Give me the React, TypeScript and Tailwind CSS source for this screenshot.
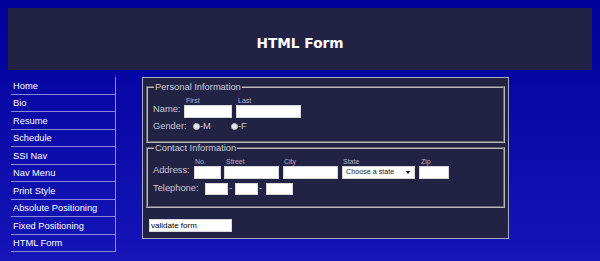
const navItems = [
  "Home",
  "Bio",
  "Resume",
  "Schedule",
  "SSI Nav",
  "Nav Menu",
  "Print Style",
  "Absolute Positioning",
  "Fixed Positioning",
  "HTML Form",
];

function Field({ label, width, pl = "pl-[1px]" }: { label: string; width: string; pl?: string }) {
  return (
    <div className="flex flex-col">
      <span className={`${pl} text-[7px] leading-[8px] text-[#b4b4cc]`}>{label}</span>
      <input type="text" className={`${width} h-[13px] border border-[#d8d8d8] bg-white`} />
    </div>
  );
}

function Radio({ label, width }: { label: string; width: string }) {
  return (
    <label className={`flex ${width} items-center`}>
      <span className="h-[7px] w-[7px] rounded-full border border-[#bbbbbb] bg-[#e8e8e8]" />
      <span>-{label}</span>
    </label>
  );
}

export default function App() {
  return (
    <div className="min-h-[261px] bg-gradient-to-b from-[#00009a] to-[#1515b8] pt-2 font-['Liberation_Sans',Arial,sans-serif]">
      <header className="mx-2 h-[62px] bg-[#222244] pt-[27px] text-center">
        <h1 className="font-['DejaVu_Sans',sans-serif] text-[13.7px] font-bold leading-[16px] text-white">
          HTML Form
        </h1>
      </header>

      <div className="mt-[7px] flex items-start pl-[11px]">
        <nav className="w-[105px] border-r border-[#8a8ad8]">
          {navItems.map((item) => (
            <a
              key={item}
              href="#"
              className="block h-[17.5px] border-b border-[#8a8ad8] pl-[2px] pt-[0.5px] text-[9.3px] leading-[16px] text-white"
            >
              {item}
            </a>
          ))}
        </nav>

        <form className="ml-[26px] h-[162px] w-[367px] border border-[#a9a9c4] bg-[#222244] text-[9.3px] text-[#c8c8d8]">
          <fieldset className="mx-[3px] mt-[3.5px] h-[61px] border-2 border-[#b8b8c4] pl-[5px] [border-style:groove]">
            <legend className="ml-[1px] px-[1px] leading-[11px] text-[#d0d0d8]">Personal Information</legend>
            <div className="mt-[4px] flex items-end gap-[4px]">
              <span className="mb-[3px] w-[27px] leading-[11px]">Name:</span>
              <Field label="First" width="w-[48px]" pl="pl-[2px]" />
              <Field label="Last" width="w-[65px]" pl="pl-[2px]" />
            </div>
            <div className="mt-[3.3px] flex items-center leading-[11px]">
              <span className="w-[40px]">Gender:</span>
              <Radio label="M" width="w-[38px]" />
              <Radio label="F" width="w-[20px]" />
            </div>
          </fieldset>

          <fieldset className="mx-[3px] h-[65px] border-2 border-[#b8b8c4] pl-[5px] [border-style:groove]">
            <legend className="ml-[1px] px-[1px] leading-[11px] text-[#d0d0d8]">Contact Information</legend>
            <div className="mt-[4px] flex items-end gap-[3px]">
              <span className="mb-[3px] w-[38px] leading-[11px]">Address:</span>
              <Field label="No." width="w-[27px]" />
              <Field label="Street" width="w-[55px]" pl="pl-[2px]" />
              <div className="ml-[1px]">
                <Field label="City" width="w-[55px]" />
              </div>
              <div className="ml-[1px] flex flex-col">
                <span className="pl-[1px] text-[7px] leading-[8px] text-[#b4b4cc]">State</span>
                <div className="flex h-[13px] w-[73px] items-center justify-between border border-[#d8d8d8] bg-white pl-[3px] pr-[4px] text-[7.2px] text-[#222222]">
                  <span>Choose a state</span>
                  <span className="h-0 w-0 border-x-[2.5px] border-t-[3px] border-x-transparent border-t-black" />
                </div>
              </div>
              <div className="ml-[1px]">
                <Field label="Zip" width="w-[30px]" pl="pl-[2px]" />
              </div>
            </div>
            <div className="mt-[4px] flex items-center leading-[11px]">
              <span className="w-[52px]">Telephone:</span>
              <input type="text" className="h-[12px] w-[23px] border border-[#d8d8d8] bg-white" />
              <span className="w-[7px] pl-[1px]">-</span>
              <input type="text" className="h-[12px] w-[23px] border border-[#d8d8d8] bg-white" />
              <span className="w-[8px] pl-[1px]">-</span>
              <input type="text" className="h-[12px] w-[27px] border border-[#d8d8d8] bg-white" />
            </div>
          </fieldset>

          <input
            type="text"
            defaultValue="validate form"
            className="ml-[6px] mt-[11.5px] h-[13px] w-[83px] border border-[#d8d8d8] bg-white pl-[1px] text-[8px] text-black"
          />
        </form>
      </div>
    </div>
  );
}
